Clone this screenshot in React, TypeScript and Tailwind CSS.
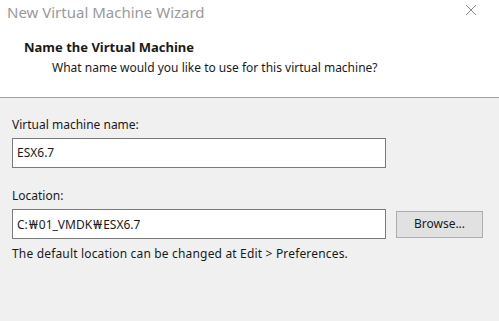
import React from "react";

export default function App() {
  const font = { fontFamily: '"Noto Sans", "Noto Sans CJK KR", sans-serif' };
  const won = <span className="inline-block w-[11px] text-center text-[13px]">₩</span>;
  return (
    <div className="w-[499px] h-[321px] bg-[#f0f0f0] flex flex-col overflow-hidden text-[#1a1a1a]" style={font}>
      <div className="bg-white h-[98px] flex flex-col border-b border-[#a0a0a0]">
        <div className="h-[24px] flex items-center justify-between pl-[7px] pr-[22px]">
          <span className="text-[15px] text-[#9a9a9a] leading-none">New Virtual Machine Wizard</span>
          <svg width="12" height="12" viewBox="0 0 12 12" className="mt-[-4px]">
            <path d="M1 1L11 11M11 1L1 11" stroke="#8a8a8a" strokeWidth="1" />
          </svg>
        </div>
        <div className="pl-[24px] pt-[14px] text-[13px] font-bold leading-[18px]">Name the Virtual Machine</div>
        <div className="pl-[52px] pt-[4px] text-[12px] leading-[16px]">What name would you like to use for this virtual machine?</div>
      </div>
      <div className="flex flex-col px-[12px] pt-[19px] text-[12px]">
        <div className="leading-[16px]">Virtual machine name:</div>
        <div className="mt-[5px] w-[374px] h-[30px] bg-white border border-[#7a7a7a] flex items-center pl-[4px] leading-none">ESX6.7</div>
        <div className="mt-[20px] leading-[16px]">Location:</div>
        <div className="mt-[5px] flex items-center gap-[10px]">
          <div className="w-[374px] h-[30px] bg-white border border-[#7a7a7a] flex items-center pl-[4px] leading-none">
            <span>C:{won}01_VMDK{won}ESX6.7</span>
          </div>
          <div className="w-[87px] h-[27px] bg-[#e1e1e1] border border-[#adadad] flex items-center justify-center leading-none">Browse...</div>
        </div>
        <div className="mt-[7px] leading-[16px] tracking-[0.17px]">The default location can be changed at Edit &gt; Preferences.</div>
      </div>
    </div>
  );
}
